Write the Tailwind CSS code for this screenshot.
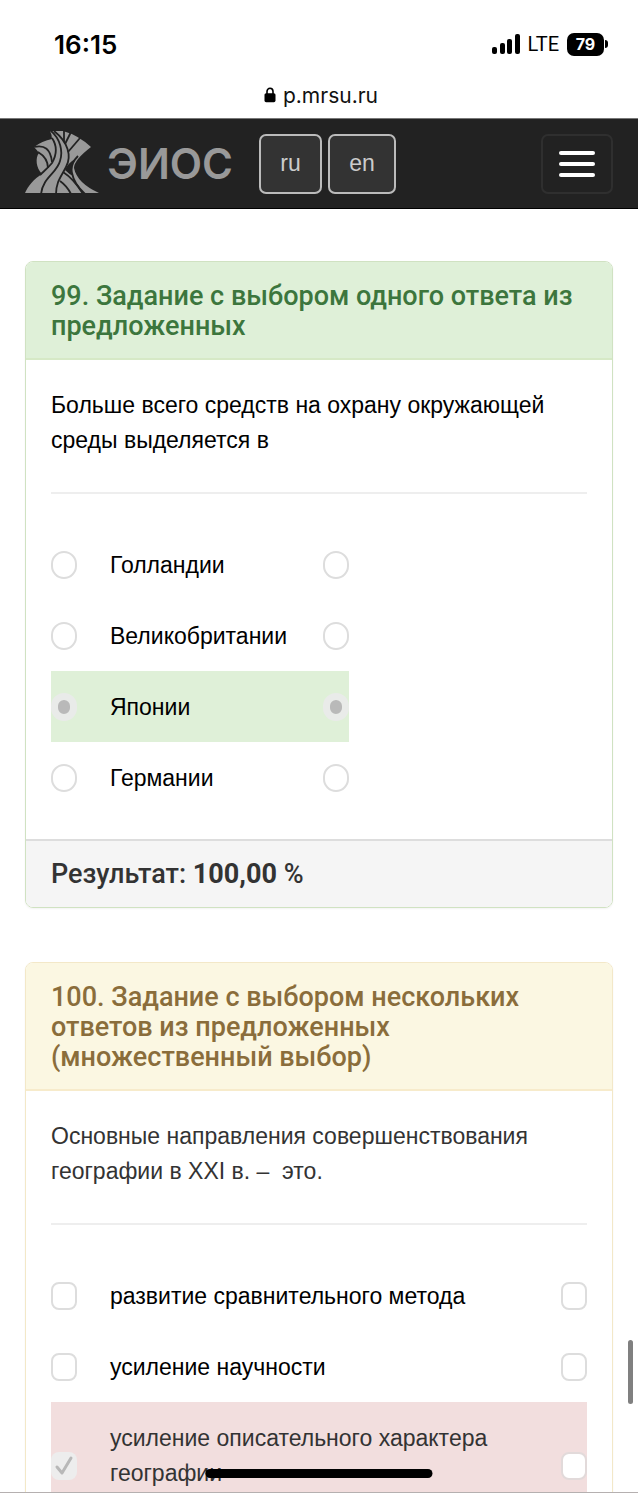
<!DOCTYPE html>
<html lang="ru">
<head>
<meta charset="utf-8">
<meta name="viewport" content="width=device-width, initial-scale=1">
<title>ЭИОС</title>
<script src="https://cdn.jsdelivr.net/npm/@tailwindcss/browser@4"></script>
</head>
<body class="relative flex h-screen flex-col overflow-hidden border-b border-[#b5b0b0] bg-white font-['Liberation_Sans',Arial,sans-serif] text-[23px] leading-[35px] text-black">

<div class="flex h-[72px] shrink-0 items-center justify-between pt-[16px] pr-[30px] pl-[54px] font-['Inter',sans-serif]">
  <span class="text-[26px] font-semibold">16:15</span>
  <div class="flex items-center">
    <svg class="mr-[7px] h-[21px] w-[29px]" viewBox="0 0 29 21" aria-hidden="true">
      <rect x="0" y="13" width="5" height="7" rx="2"/><rect x="8" y="9" width="5" height="11" rx="2"/><rect x="15" y="5" width="5" height="15" rx="2"/><rect x="23" y="0" width="5" height="20" rx="2"/>
    </svg>
    <span class="mr-[8px] font-['Roboto',sans-serif] text-[20px]">LTE</span>
    <span class="flex h-[23px] w-[37px] items-center justify-center rounded-[7px] bg-black text-[16px] font-bold text-white">79</span>
    <span class="ml-px h-[8px] w-[3px] rounded-r-full bg-black"></span>
  </div>
</div>
<div class="flex h-[46px] shrink-0 items-center justify-center gap-[7px] pl-[4px] font-['Inter',sans-serif] text-[21px] text-[#111]">
  <svg class="h-[16px] w-[12px]" viewBox="0 0 12 16" aria-hidden="true"><path d="M3 7V4.500a3 3.300 0 0 1 6 0V7" fill="none" stroke="#000" stroke-width="1.6"/><rect x=".5" y="6.2" width="11" height="9" rx="1.6"/></svg>
  <span>p.mrsu.ru</span>
</div>

<nav class="flex h-[91px] shrink-0 items-center border-y border-black border-t-[#777] bg-[#222] px-[25px]">
  <a href="#" class="flex items-center" aria-label="ЭИОС">
    <svg class="-mt-[4px] h-[64px] w-[74px] shrink-0" viewBox="0 0 74 64" fill="none" aria-hidden="true">
      <path fill="#999" d="M0 63C3 56 9 49 17 44C11 38 10 28 14 23Q12 20 9 17Q17 11 27 9Q27 5 25 1H38Q53 5 66 17Q49 30 49 38Q52 53 74 63Z"/>
      <g stroke="#222" stroke-width="1.8">
        <path d="M25 0C36 9 38 22 35 31C32 43 18 47 16 64"/>
        <path d="M29 1C43 12 47 26 41 37C36 47 31 52 31 64"/>
        <path d="M27 8C33 17 31 26 27 33C23 38 19 41 15 45"/>
        <path d="M13 22Q23 28 23 38"/>
        <path d="M9 17Q25 13 27 32"/>
        <path d="M39 0V12"/>
        <path d="M46 2L40 14"/>
        <path d="M55 8L43 22"/>
        <path d="M53 26Q45 34 47 43Q49 54 60 64"/>
        <path d="M38 42Q49 49 58 64"/>
        <path d="M35 51Q42 56 46 64"/>
      </g>
      <path fill="#222" d="M40 40Q43 33 50 29Q44 38 48 46Q44 44 40 40Z"/>
    </svg>
    <span class="ml-[8px] font-['Inter',sans-serif] text-[42px] leading-[48px] font-semibold text-[#999]">ЭИОС</span>
  </a>
  <div class="ml-[26px] flex gap-[6px]">
    <button type="button" class="h-[60px] w-[63px] rounded-[7px] border-2 border-[#bbb] bg-[#333] text-[#ccc]">ru</button>
    <button type="button" class="h-[60px] w-[68px] rounded-[7px] border-2 border-[#bbb] bg-[#333] text-[#ccc]">en</button>
  </div>
  <button type="button" aria-label="Меню" class="ml-auto flex h-[60px] w-[72px] flex-col items-center justify-center gap-[7px] rounded-[7px] border-2 border-[#2f2f2f]">
    <span class="h-[4px] w-[36px] rounded-[2px] bg-white"></span>
    <span class="h-[4px] w-[36px] rounded-[2px] bg-white"></span>
    <span class="h-[4px] w-[36px] rounded-[2px] bg-white"></span>
  </button>
</nav>

<main class="min-h-0 flex-1 overflow-y-auto px-[25px] pt-[52px] [scrollbar-width:none]">
  <section class="rounded-[8px] border border-[#d0e2c2] shadow-xs">
    <h2 class="rounded-t-[7px] border-b-2 border-[#d6e9c6] bg-[#dff0d8] px-[25px] pt-[19px] pb-[17px] font-['Roboto',sans-serif] text-[27px] leading-[30px] font-medium text-[#3c763d]">99. Задание с выбором одного ответа из предложенных</h2>
    <div class="px-[25px] pt-[28px] pb-[26px]">
      <p>Больше всего средств на охрану окружающей среды выделяется в</p>
      <hr class="mt-[34px] mb-[35px] border-t-2 border-[#eee]">
      <table>
        <tbody>
          <tr class="h-[71px]">
            <td class="w-[59px]"><input type="radio" name="answer99" disabled aria-labelledby="a1" class="block h-[28px] w-[26px] appearance-none rounded-full border-2 border-[#ddd] bg-white"></td>
            <td id="a1" class="w-[213px] pt-[2px]">Голландии</td>
            <td><input type="radio" name="correct99" disabled aria-labelledby="a1" class="block h-[28px] w-[26px] appearance-none rounded-full border-2 border-[#ddd] bg-white"></td>
          </tr>
          <tr class="h-[71px]">
            <td><input type="radio" name="answer99" disabled aria-labelledby="a2" class="block h-[28px] w-[26px] appearance-none rounded-full border-2 border-[#ddd] bg-white"></td>
            <td id="a2" class="pt-[2px]">Великобритании</td>
            <td><input type="radio" name="correct99" disabled aria-labelledby="a2" class="block h-[28px] w-[26px] appearance-none rounded-full border-2 border-[#ddd] bg-white"></td>
          </tr>
          <tr class="h-[71px] bg-[#dff0d8]">
            <td><input type="radio" name="answer99" checked disabled aria-labelledby="a3" class="block h-[28px] w-[26px] appearance-none rounded-full border-[7px] border-[#e9ebe9] bg-[#b9b9b9]"></td>
            <td id="a3" class="pt-[2px]">Японии</td>
            <td><input type="radio" name="correct99" checked disabled aria-labelledby="a3" class="block h-[28px] w-[26px] appearance-none rounded-full border-[7px] border-[#e9ebe9] bg-[#b9b9b9]"></td>
          </tr>
          <tr class="h-[71px]">
            <td><input type="radio" name="answer99" disabled aria-labelledby="a4" class="block h-[28px] w-[26px] appearance-none rounded-full border-2 border-[#ddd] bg-white"></td>
            <td id="a4" class="pt-[2px]">Германии</td>
            <td><input type="radio" name="correct99" disabled aria-labelledby="a4" class="block h-[28px] w-[26px] appearance-none rounded-full border-2 border-[#ddd] bg-white"></td>
          </tr>
        </tbody>
      </table>
    </div>
    <div class="rounded-b-[7px] border-t-2 border-[#ddd] bg-[#f5f5f5] px-[25px] py-[18px] font-['Roboto',sans-serif] text-[27px] leading-[30px] font-medium text-[#333]">Результат: <b class="font-bold">100,00</b> %</div>
  </section>

  <section class="mt-[54px] rounded-[8px] border border-[#f3e8c8] shadow-xs">
    <h2 class="rounded-t-[7px] border-b-2 border-[#f7ebcb] bg-[#fbf7e2] px-[25px] pt-[19px] pb-[17px] font-['Roboto',sans-serif] text-[27px] leading-[30px] font-medium text-[#8a6d3b]">100. Задание с выбором нескольких ответов из предложенных (множественный выбор)</h2>
    <div class="px-[25px] pt-[28px] pb-[26px]">
      <p class="text-[#333]">Основные направления совершенствования географии в XXI в. –&nbsp; это.</p>
      <hr class="mt-[34px] mb-[35px] border-t-2 border-[#eee]">
      <table class="w-full">
        <tbody>
          <tr class="h-[71px]">
            <td class="w-[59px]"><input type="checkbox" disabled aria-labelledby="b1" class="block h-[28px] w-[26px] appearance-none rounded-[8px] border-2 border-[#ddd] bg-white"></td>
            <td id="b1" class="pt-[2px]">развитие сравнительного метода</td>
            <td class="w-[26px]"><input type="checkbox" disabled aria-labelledby="b1" class="block h-[28px] w-[26px] appearance-none rounded-[8px] border-2 border-[#ddd] bg-white"></td>
          </tr>
          <tr class="h-[71px]">
            <td><input type="checkbox" disabled aria-labelledby="b2" class="block h-[28px] w-[26px] appearance-none rounded-[8px] border-2 border-[#ddd] bg-white"></td>
            <td id="b2" class="pt-[2px]">усиление научности</td>
            <td><input type="checkbox" disabled aria-labelledby="b2" class="block h-[28px] w-[26px] appearance-none rounded-[8px] border-2 border-[#ddd] bg-white"></td>
          </tr>
          <tr class="h-[127px] bg-[#f2dede] text-[#333]">
            <td>
              <div class="grid h-[28px] w-[26px]">
                <input type="checkbox" checked disabled aria-labelledby="b3" class="col-start-1 row-start-1 h-[28px] w-[26px] appearance-none rounded-[8px] bg-[#ededed]">
                <svg class="col-start-1 row-start-1 h-[28px] w-[26px]" viewBox="0 0 26 28" fill="none" stroke="#b8b8b8" stroke-width="3" stroke-linecap="round" stroke-linejoin="round" aria-hidden="true"><path d="M6 15L11 21L20 6"/></svg>
              </div>
            </td>
            <td id="b3" class="pt-[19px] pr-[60px] align-top">усиление описательного характера географии</td>
            <td><input type="checkbox" disabled aria-labelledby="b3" class="block h-[28px] w-[26px] appearance-none rounded-[8px] border-2 border-[#e2dada] bg-white"></td>
          </tr>
        </tbody>
      </table>
    </div>
  </section>
</main>

<div class="absolute right-[5px] bottom-[88px] h-[64px] w-[5px] rounded-full bg-[#808080]"></div>
<div class="absolute bottom-[14px] left-1/2 h-[9px] w-[227px] -translate-x-1/2 rounded-full bg-black"></div>
</body>
</html>
